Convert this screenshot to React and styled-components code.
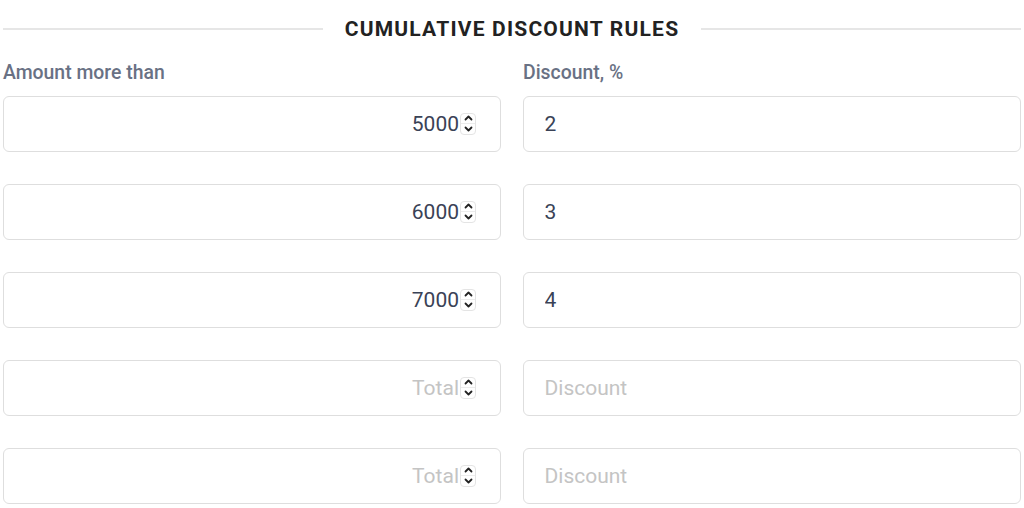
import React from "react";
import styled, { createGlobalStyle } from "styled-components";

const Global = createGlobalStyle`
  html, body { margin: 0; padding: 0; background: #fff; }
  body { font-family: Roboto, "Liberation Sans", sans-serif; }
  * { box-sizing: border-box; }
`;

const Page = styled.div`
  width: 1024px;
  padding: 16px 3px 0 3px;
`;

const Heading = styled.div`
  display: flex;
  align-items: center;
  gap: 22px;
  height: 26px;
`;

const Rule = styled.div`
  flex: 1;
  height: 2px;
  background: #e6e6e6;
`;

const Title = styled.h2`
  margin: 0;
  font-size: 21px;
  line-height: 26px;
  font-weight: 700;
  letter-spacing: 1.2px;
  color: #222;
  white-space: nowrap;
`;

const Grid = styled.div`
  display: grid;
  grid-template-columns: 1fr 1fr;
  column-gap: 22px;
  margin-top: 20px;
`;

const Column = styled.div`
  display: flex;
  flex-direction: column;
  gap: 32px;
`;

const Label = styled.label`
  display: block;
  font-size: 19.4px;
  font-weight: 500;
  color: #697184;
  height: 22px;
  line-height: 22px;
  margin-bottom: -20px;
`;

const Field = styled.div`
  display: flex;
  align-items: center;
  height: 56px;
  border: 1.5px solid #dedede;
  border-radius: 6px;
  background: #fff;
  padding: ${(p) => (p.$number ? "0 24px 0 20px" : "0 20px 0 20.5px")};
`;

const Input = styled.input`
  flex: 1;
  min-width: 0;
  border: none;
  outline: none;
  background: transparent;
  font-family: Roboto, "Liberation Sans", sans-serif;
  font-size: 21px;
  color: #3a4256;
  padding: 0;
  margin-top: -1px;
  text-align: ${(p) => (p.$right ? "right" : "left")};
  &::placeholder { color: #c4c4c4; }
`;

const Spinner = styled.div`
  width: 16px;
  height: 22px;
  margin-left: 1px;
  margin-top: -1px;
  border: 1px solid #e4e4e4;
  border-radius: 4px;
  display: flex;
  flex-direction: column;
  background: #fff;
`;

const SpinHalf = styled.span`
  flex: 1;
  display: flex;
  align-items: center;
  justify-content: center;
  border-top: ${(p) => (p.$down ? "1px solid #ececec" : "none")};
`;

const Chevron = ({ down }) => (
  <svg width="9" height="6" viewBox="0 0 9 6">
    <path
      d={down ? "M1.5 1.5 L4.5 4.5 L7.5 1.5" : "M1.5 4.5 L4.5 1.5 L7.5 4.5"}
      fill="none"
      stroke="#222"
      strokeWidth="1.8"
      strokeLinecap="round"
      strokeLinejoin="round"
    />
  </svg>
);

const NumberField = ({ value, placeholder }) => (
  <Field $number>
    <Input $right type="text" inputMode="numeric" defaultValue={value} placeholder={placeholder} />
    <Spinner>
      <SpinHalf><Chevron /></SpinHalf>
      <SpinHalf $down><Chevron down /></SpinHalf>
    </Spinner>
  </Field>
);

const TextField = ({ value, placeholder }) => (
  <Field>
    <Input type="text" defaultValue={value} placeholder={placeholder} />
  </Field>
);

const rules = [
  { amount: "5000", discount: "2" },
  { amount: "6000", discount: "3" },
  { amount: "7000", discount: "4" },
  { amount: "", discount: "" },
  { amount: "", discount: "" },
];

export default function App() {
  return (
    <>
      <Global />
      <Page>
        <Heading>
          <Rule />
          <Title>CUMULATIVE DISCOUNT RULES</Title>
          <Rule />
        </Heading>
        <Grid>
          <Column>
            <Label>Amount more than</Label>
            {rules.map((r, i) => (
              <NumberField key={i} value={r.amount} placeholder="Total" />
            ))}
          </Column>
          <Column>
            <Label>Discount, %</Label>
            {rules.map((r, i) => (
              <TextField key={i} value={r.discount} placeholder="Discount" />
            ))}
          </Column>
        </Grid>
      </Page>
    </>
  );
}
